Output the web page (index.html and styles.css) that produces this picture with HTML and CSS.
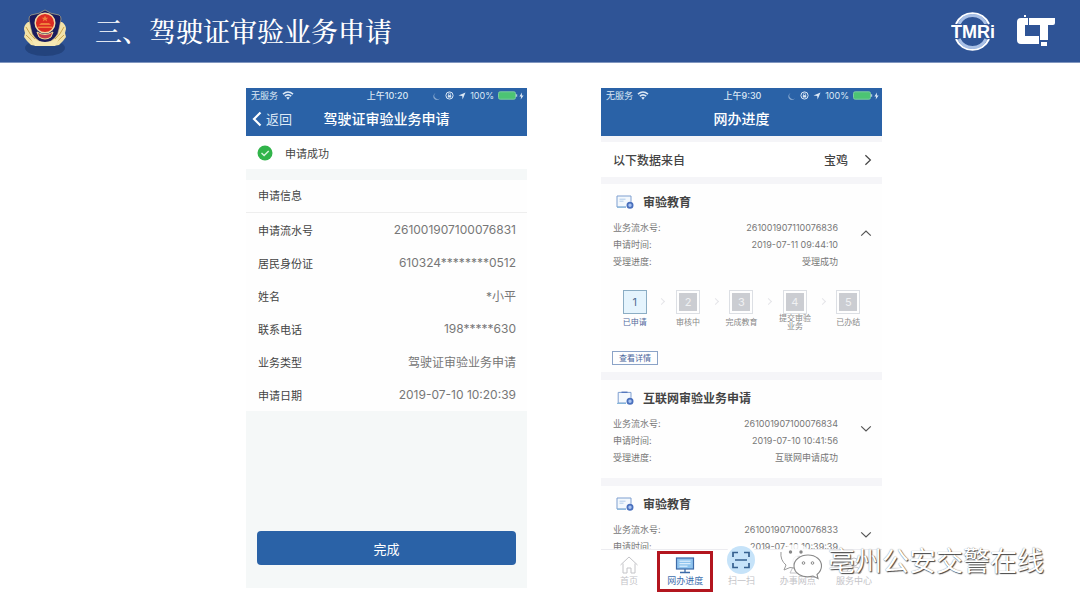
FILE: index.html
```html
<!DOCTYPE html>
<html lang="zh-CN">
<head>
<meta charset="utf-8">
<meta name="viewport" content="width=device-width, initial-scale=1">
<title>驾驶证审验业务申请</title>
<link rel="stylesheet" href="styles.css">
</head>
<body>
<svg class="defs" width="0" height="0" aria-hidden="true">
  <symbol id="wifi" viewBox="0 0 12 9"><path d="M1 3.2Q6-1.2 11 3.2M2.8 5.2Q6 2.4 9.2 5.2" fill="none" stroke="currentColor" stroke-width="1.6"/><path d="M4.2 6.6Q6 5.2 7.8 6.6L6 8.7z" fill="currentColor"/></symbol>
  <symbol id="moon" viewBox="0 0 8 8"><path d="M2.6 1A3.4 3.4 0 0 0 7 6.2 3.6 3.6 0 1 1 2.6 1z" fill="currentColor"/></symbol>
  <symbol id="lock" viewBox="0 0 9 9"><circle cx="4.5" cy="4.5" r="3.6" fill="none" stroke="currentColor" stroke-width="1"/><path d="M2.8 4.2h3.4v2.3H2.8z" fill="currentColor"/><path d="M3.5 4.3V3.2a1 1 0 0 1 2 0v1.1" fill="none" stroke="currentColor" stroke-width=".7"/></symbol>
  <symbol id="arrow" viewBox="0 0 8 8"><path d="M7.5.5 4.6 7.5 4.2 3.9.5 3.5z" fill="currentColor"/></symbol>
  <symbol id="battery" viewBox="0 0 20 9"><rect x=".5" y=".8" width="17" height="7.4" rx="1.6" fill="#4cc474" stroke="#7ccba0" stroke-width="1"/><path d="M18.6 3.2v2.6" stroke="#a9c6df" stroke-width="1.2"/></symbol>
  <symbol id="bolt" viewBox="0 0 5 8"><path d="M3 .5.4 4.5h1.7L1.7 7.6 4.6 3.4H2.8z" fill="currentColor"/></symbol>
  <symbol id="doc" viewBox="0 0 18 14"><path d="M15 6.8V1H1v11h9" fill="#f3f8fd" stroke="#7f9fd0" stroke-width="1"/><path d="M3.5 4.2h6M3.5 6.2h4" stroke="#a8c6e8" stroke-width=".9"/><path d="M1 12.2h9" stroke="#7fb2d8" stroke-width="1"/><circle cx="14" cy="10.3" r="2.6" fill="#a8c3f0" stroke="#4a70bd" stroke-width="1.800"/></symbol>
  <symbol id="clip" viewBox="0 0 18 14"><path d="M15 6.8V1.4H2.2V12H10" fill="#f3f8fd" stroke="#7f9fd0" stroke-width="1"/><path d="M5.500.600h6v1.400h-6z" fill="#5578bd"/><path d="M1 12.4h9" stroke="#7fb2d8" stroke-width="1"/><circle cx="14" cy="10.3" r="2.6" fill="#a8c3f0" stroke="#4a70bd" stroke-width="1.800"/></symbol>
  <symbol id="down" viewBox="0 0 12 8"><path d="M1.2 1.4 6 6l4.8-4.6" fill="none" stroke="currentColor" stroke-width="1.2"/></symbol>
</svg>

<header class="banner">
  <svg class="emblem" viewBox="0 0 46 52" aria-label="警徽" role="img">
    <ellipse cx="23" cy="43" rx="20" ry="8" fill="#1d3a70" opacity=".65"/>
    <path d="M6 17q-4 3-4 7l1 4-1 4 3 4 4 4 6 1h16l6-1 4-4 3-4-1-4 1-4q0-4-4-7z" fill="#f3e3a8"/>
    <path d="M4 22q4 8 9 12M4 30q5 6 12 9M42 22q-4 8-9 12M42 30q-5 6-12 9" fill="none" stroke="#c9a34c" stroke-width="1"/>
    <path d="M23 5q5 4 14 5 2 1 2 4l-2 10q-1 10-14 15Q10 34 9 24L7 14q0-3 2-4 9-1 14-5z" fill="#1a1c5c" stroke="#cfbd86" stroke-width=".6"/>
    <circle cx="23" cy="18" r="9.800" fill="#dc2b22" stroke="#f4d6a0" stroke-width="1.500"/>
    <path d="m23 10.500 1 2.200h2.300l-1.800 1.500.7 2.200-2.200-1.300-2.200 1.300.7-2.200-1.800-1.500H22zM17 20h12l-2-2h-8zM16 21.500h14V23H16z" fill="#f0803c"/>
    <path d="M15 27q8 5 16 0l-2 5q-6 4-12 0z" fill="#c83a4a" stroke="#f3dc94" stroke-width="1"/>
    <path d="M9 34q14 6 28 0l-4 7H13z" fill="#f6e8b4"/>
  </svg>
  <h1 class="banner-title">三、驾驶证审验业务申请</h1>
  <div class="logos">
    <svg class="logo-tmri" viewBox="0 0 44 40" role="img" aria-label="TMRI">
      <g fill="none"><path d="M5 13A18 18 0 0 1 38 13M5 28A18 18 0 0 0 38 28" stroke="#fff" stroke-width="2"/><path d="M8 13A15 15 0 0 1 35 13M8 28A15 15 0 0 0 35 28" stroke="#a9c0e6" stroke-width="3"/></g>
      <text class="logo-text" x="22" y="27" text-anchor="middle">TMRi</text>
    </svg>
    <svg class="logo-lt" viewBox="0 0 40 32" role="img" aria-label="LT">
      <path d="M5 3h7v7H9v11h14v8H5q-4 0-4-4V7q0-4 4-4zM13 3h26v5q0 2-2 2h-5v15h-8V10H13zM25 27h6v4h-6zM8 0h2v2H8z" fill="#fff"/>
    </svg>
  </div>
</header>

<main class="stage">
  <section class="phone phone-form">
    <header class="bar">
      <div class="status">
        <span class="carrier">无服务 <svg class="i-wifi"><use href="#wifi"/></svg></span>
        <span class="clock">上午10:20</span>
        <span class="power"><svg class="i-s dim"><use href="#moon"/></svg><svg class="i-m"><use href="#lock"/></svg><svg class="i-s"><use href="#arrow"/></svg>100%<span class="charge"><svg class="i-batt"><use href="#battery"/></svg><svg class="i-bolt"><use href="#bolt"/></svg></span></span>
      </div>
      <div class="nav">
        <button class="back" type="button"><svg class="i-back" viewBox="0 0 10 16"><path d="M8.500 1.500 2 8l6.500 6.500" fill="none" stroke="currentColor" stroke-width="2.200"/></svg>返回</button>
        <h2 class="nav-title">驾驶证审验业务申请</h2>
      </div>
    </header>
    <p class="success"><svg class="i-ok" viewBox="0 0 16 16"><circle cx="8" cy="8" r="7.500" fill="#31b44a"/><path d="m4.500 8 2.600 2.500 4.600-4.600" fill="none" stroke="#d9f5dd" stroke-width="1.400"/></svg>申请成功</p>
    <div class="info">
      <h3 class="info-title">申请信息</h3>
      <dl class="fields">
        <div class="field"><dt>申请流水号</dt><dd>261001907100076831</dd></div>
        <div class="field"><dt>居民身份证</dt><dd>610324********0512</dd></div>
        <div class="field"><dt>姓名</dt><dd>*小平</dd></div>
        <div class="field"><dt>联系电话</dt><dd>198*****630</dd></div>
        <div class="field"><dt>业务类型</dt><dd>驾驶证审验业务申请</dd></div>
        <div class="field"><dt>申请日期</dt><dd>2019-07-10 10:20:39</dd></div>
      </dl>
    </div>
    <button class="done" type="button">完成</button>
  </section>

  <section class="phone phone-list">
    <header class="bar">
      <div class="status">
        <span class="carrier">无服务 <svg class="i-wifi"><use href="#wifi"/></svg></span>
        <span class="clock">上午9:30</span>
        <span class="power"><svg class="i-s dim"><use href="#moon"/></svg><svg class="i-m"><use href="#lock"/></svg><svg class="i-s"><use href="#arrow"/></svg>100%<span class="charge"><svg class="i-batt"><use href="#battery"/></svg><svg class="i-bolt"><use href="#bolt"/></svg></span></span>
      </div>
      <div class="nav"><h2 class="nav-title">网办进度</h2></div>
    </header>
    <div class="feed">
      <button class="source" type="button"><span>以下数据来自</span><span class="city">宝鸡</span><svg class="i-next" viewBox="0 0 8 12"><path d="m1.400 1.200 5 4.800-5 4.800" fill="none" stroke="currentColor" stroke-width="1.200"/></svg></button>

      <article class="card">
        <h3 class="card-title"><svg class="i-doc"><use href="#doc"/></svg>审验教育</h3>
        <div class="card-body">
          <dl class="meta">
            <div class="meta-row"><dt>业务流水号:</dt><dd>261001907110076836</dd></div>
            <div class="meta-row"><dt>申请时间:</dt><dd>2019-07-11 09:44:10</dd></div>
            <div class="meta-row"><dt>受理进度:</dt><dd>受理成功</dd></div>
          </dl>
          <button class="toggle open" type="button" aria-label="收起"><svg class="i-down"><use href="#down"/></svg></button>
        </div>
        <ol class="steps">
          <li class="step current"><span class="num">1</span><span class="step-name">已申请</span></li>
          <li class="step"><span class="num">2</span><span class="step-name">审核中</span></li>
          <li class="step"><span class="num">3</span><span class="step-name">完成教育</span></li>
          <li class="step"><span class="num">4</span><span class="step-name two">提交审验<br>业务</span></li>
          <li class="step"><span class="num">5</span><span class="step-name">已办结</span></li>
        </ol>
        <button class="detail" type="button">查看详情</button>
      </article>

      <article class="card">
        <h3 class="card-title"><svg class="i-doc"><use href="#clip"/></svg>互联网审验业务申请</h3>
        <div class="card-body">
          <dl class="meta">
            <div class="meta-row"><dt>业务流水号:</dt><dd>261001907100076834</dd></div>
            <div class="meta-row"><dt>申请时间:</dt><dd>2019-07-10 10:41:56</dd></div>
            <div class="meta-row"><dt>受理进度:</dt><dd>互联网申请成功</dd></div>
          </dl>
          <button class="toggle" type="button" aria-label="展开"><svg class="i-down"><use href="#down"/></svg></button>
        </div>
      </article>

      <article class="card">
        <h3 class="card-title"><svg class="i-doc"><use href="#doc"/></svg>审验教育</h3>
        <div class="card-body">
          <dl class="meta">
            <div class="meta-row"><dt>业务流水号:</dt><dd>261001907100076833</dd></div>
            <div class="meta-row"><dt>申请时间:</dt><dd>2019-07-10 10:39:39</dd></div>
          </dl>
          <button class="toggle" type="button" aria-label="展开"><svg class="i-down"><use href="#down"/></svg></button>
        </div>
      </article>
    </div>
    <nav class="tabs">
      <a class="tab" href="#home"><svg class="i-tab" viewBox="0 0 20 20"><path d="M1.500 10 10 2l8.500 8M4 8.500V18h4v-5h4v5h4V8.500" fill="none" stroke="currentColor"/></svg>首页</a>
      <a class="tab active" href="#progress"><svg class="i-tab" viewBox="0 0 20 20"><rect x="1.500" y="3" width="17" height="11" fill="#8fc4ee" stroke="#3d6ba8" stroke-width="1.200"/><path d="M4.500 6.200h11M4.500 8.700h11M4.500 11.200h8" stroke="#edf7ff" stroke-width="1"/><path d="M10 14v3M5 17.500h10" stroke="#3d6ba8" stroke-width="1.300"/></svg>网办进度</a>
      <a class="tab scan" href="#scan"><span class="scan-disc"><svg class="i-scan" viewBox="0 0 18 18"><path d="M1 6V1.500h5M12 1.500h5V6M1 12v4.500h5M12 16.500h5V12M3 9h12" fill="none" stroke="#35608f" stroke-width="1.700"/></svg></span>扫一扫</a>
      <a class="tab" href="#places"><svg class="i-tab" viewBox="0 0 20 20"><path d="M5 12 2 18h16l-3-6M10 15q-5-6-5-9a5 5 0 0 1 10 0q0 3-5 9z" fill="none" stroke="currentColor"/></svg>办事网点</a>
      <a class="tab" href="#service"><svg class="i-tab" viewBox="0 0 20 20"><circle cx="10" cy="7" r="4" fill="none" stroke="currentColor"/><path d="M3 18q0-6 7-6t7 6z" fill="none" stroke="currentColor"/></svg>服务中心</a>
    </nav>
  </section>
</main>

<div class="watermark">
  <svg class="i-chat" viewBox="0 0 46 38">
    <path d="M8 22Q2 18 2.500 12 4 3 15 1.500 28 0 33 10q-14 0-17 8-1 4 0 7-3 0-5-1l-5 3z" fill="#fff" fill-opacity=".8"/>
    <path d="M3 9q-1 8 5 13l-2 5 6-2.500 4 .5" fill="none" stroke="#999"/>
    <circle cx="12.500" cy="9" r="1.700" fill="#888"/><circle cx="23" cy="9" r="1.700" fill="#888"/>
    <path d="M30 12c8 0 13.500 5 13.500 11 0 4-2 6.500-4.500 8.500l1 4-5-2.500c-11 3-19-3-19-10 0-6 6-11 14-11z" fill="#fff" stroke="#888" stroke-width="1.100"/>
    <circle cx="25.500" cy="20" r="1.300" fill="none" stroke="#888"/><circle cx="34.500" cy="20" r="1.300" fill="none" stroke="#888"/>
  </svg>
  <span>亳州公安交警在线</span>
</div>
</body>
</html>
```
FILE: styles.css
```css
* { box-sizing: border-box; }

body {
  margin: 0;
  height: 100vh;
  min-height: 560px;
  display: flex;
  flex-direction: column;
  position: relative;
  background: #fff;
  color: #444;
  font-family: Inter, "Noto Sans CJK SC", sans-serif;
  font-size: 11px;
}

h1, h2, h3, p, dl, dd, ol { margin: 0; padding: 0; font-weight: 400; }
ol { list-style: none; }
button { font: inherit; color: inherit; background: none; border: 0; padding: 0; cursor: pointer; }
svg { display: block; flex: none; }
.defs { position: absolute; }

.banner {
  flex: none;
  height: 63px;
  display: flex;
  align-items: center;
  padding: 0 24px 0 22px;
  background: #2f5496;
  border-bottom: 1px solid #8096bf;
  color: #fff;
}
.emblem { width: 46px; height: 52px; }
.banner-title {
  flex: 1;
  margin-left: 27px;
  font-family: "Noto Serif CJK SC", "Noto Sans CJK SC", serif;
  font-size: 27px;
  font-weight: 500;
  line-height: 40px;
}
.logos { display: flex; align-items: center; gap: 21px; }
.logo-tmri { width: 44px; height: 40px; }
.logo-lt { width: 40px; height: 32px; }
.logo-text {
  font: bold 18px "Liberation Sans", sans-serif;
  fill: #fff;
  stroke: #2f5496;
  stroke-width: 2px;
  paint-order: stroke;
}

.stage {
  flex: 1;
  min-height: 0;
  display: grid;
  grid-template-columns: 246fr 281fr 74fr 281fr 198fr;
  padding: 25px 0 16px;
}
.phone { display: flex; flex-direction: column; min-width: 0; min-height: 0; }
.phone-form { grid-column: 2; margin-bottom: 4px; background: #f5f8f8; }
.phone-list { grid-column: 4; }

.bar { flex: none; height: 48px; background: #2a62a7; color: #fff; }
.status {
  display: grid;
  grid-template-columns: 1fr auto 1fr;
  align-items: center;
  height: 15px;
  padding: 0 3px 0 5px;
  font-size: 9px;
  color: #dce8f5;
}
.carrier, .power { display: flex; align-items: center; gap: 4px; }
.power { justify-content: flex-end; }
.charge { display: flex; align-items: center; gap: 1px; }
.clock { font-weight: 500; }
.i-wifi { width: 12px; height: 9px; }
.i-s { width: 8px; height: 8px; }
.i-m { width: 9px; height: 9px; }
.i-batt { width: 20px; height: 9px; }
.i-bolt { width: 5px; height: 8px; }
.dim { opacity: .5; }
.nav {
  display: grid;
  grid-template-columns: 1fr auto 1fr;
  align-items: center;
  height: 32px;
  padding: 0 6px;
}
.nav-title { grid-column: 2; font-size: 14px; font-weight: 500; line-height: 20px; }
.back { display: flex; align-items: center; gap: 4px; font-size: 13px; line-height: 20px; color: #dce8f5; }
.i-back { width: 10px; height: 16px; color: #fff; }

.success {
  display: flex;
  align-items: center;
  gap: 12px;
  height: 33px;
  padding: 0 11px;
  background: #fff;
}
.i-ok { width: 16px; height: 16px; }
.info { margin-top: 11px; background: #fefefe; }
.info-title { height: 33px; padding: 0 12px; font-size: 11px; line-height: 33px; border-bottom: 1px solid #eee; }
.field { display: flex; justify-content: space-between; align-items: center; height: 33px; padding: 0 11px 0 12px; }
.field dd { font-size: 12px; color: #777; }
.done {
  height: 34px;
  margin: auto 11px 23px;
  border-radius: 4px;
  background: #2a62a7;
  color: #fff;
  font-size: 13px;
}

.feed { flex: 1; min-height: 0; overflow: hidden; padding-top: 6px; background: #f5f5f8; }
.source {
  display: flex;
  align-items: center;
  width: 100%;
  height: 35px;
  padding: 0 10px 0 12px;
  background: #fff;
  font-size: 12px;
  font-weight: 500;
}
.city { margin-left: auto; }
.i-next { width: 8px; height: 12px; margin-left: 16px; }
.card { margin-top: 7px; padding-bottom: 7px; background: #fefefe; }
.card + .card { margin-top: 8px; }
.card-title {
  display: flex;
  align-items: center;
  gap: 9px;
  height: 35px;
  padding-left: 15px;
  font-size: 12px;
  font-weight: 700;
  color: #444;
}
.i-doc { width: 18px; height: 14px; }
.card-body { display: flex; align-items: center; padding: 0 10px 5px 12px; color: #777; font-size: 9px; line-height: 17px; }
.meta { flex: 1; }
.meta-row { display: flex; justify-content: space-between; }
.toggle { align-self: flex-start; margin: 10px 0 0 22px; color: #555; }
.i-down { width: 12px; height: 8px; }
.open .i-down { transform: rotate(180deg); }

.steps { display: grid; grid-template-columns: repeat(5, 1fr); padding: 15px 7px 0; }
.step { position: relative; display: flex; flex-direction: column; align-items: center; }
.step + .step::before {
  content: "";
  position: absolute;
  top: 9px;
  left: -2px;
  width: 4px;
  height: 4px;
  border: 1px solid #e5e5e9;
  border-width: 1px 1px 0 0;
  transform: rotate(45deg);
}
.num {
  width: 24px;
  height: 24px;
  border: 1px solid #dcdfe4;
  padding: 2px;
  background: #cbcdd2 content-box;
  color: #f0f1f3;
  font-size: 11px;
  line-height: 18px;
  text-align: center;
}
.current .num { border-color: #8badc4; background: #e5f4fd; color: #506f94; }
.step-name { height: 16px; font-size: 8px; line-height: 16px; color: #888; white-space: nowrap; text-align: center; }
.step-name.two { line-height: 8px; }
.current .step-name { color: #53699c; }
.detail {
  display: block;
  width: 46px;
  height: 14px;
  margin: 21px 0 0 11px;
  border: 1px solid #8ba3c7;
  color: #4c669b;
  font-size: 8px;
  line-height: 12px;
}

.tabs {
  flex: none;
  display: grid;
  grid-template-columns: repeat(5, 1fr);
  height: 43px;
  border-top: 1px solid #ececf0;
  background: #fff;
}
.tab {
  display: flex;
  flex-direction: column;
  align-items: center;
  justify-content: flex-end;
  min-width: 0;
  padding-bottom: 5px;
  color: #c4c4c8;
  font-size: 9px;
  line-height: 12px;
  text-decoration: none;
  white-space: nowrap;
}
.i-tab { width: 20px; height: 20px; }
.active { margin-top: 1px; padding-bottom: 2px; border: 3px solid #b3161f; color: #3f6fae; }
.scan-disc {
  display: grid;
  place-items: center;
  width: 28px;
  height: 28px;
  margin: -6px 0 1px;
  border-radius: 50%;
  background: #c6e3f9;
  box-shadow: 0 0 0 3px #fff;
}
.i-scan { width: 18px; height: 18px; }

.watermark {
  position: absolute;
  right: 36px;
  bottom: 26px;
  display: flex;
  align-items: center;
  gap: 4px;
  color: #fff;
  font-size: 27px;
  line-height: 40px;
  text-shadow: 1px 1px 1px #444, 0 0 1px #777;
}
.i-chat { width: 46px; height: 38px; }
```
